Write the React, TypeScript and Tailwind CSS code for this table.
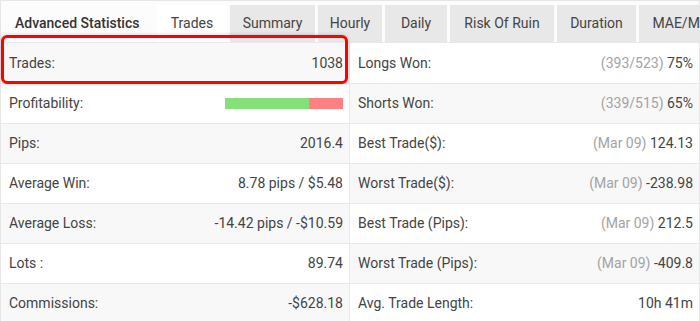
const tabs = [
  { label: "Trades", w: "w-[70px]", active: true },
  { label: "Summary", w: "w-[85px]" },
  { label: "Hourly", w: "w-[64px]" },
  { label: "Daily", w: "w-[62px]" },
  { label: "Risk Of Ruin", w: "w-[104px]" },
  { label: "Duration", w: "w-[79px]" },
  { label: "MAE/MFE", w: "w-[90px]" },
];

type Cell = { label: string; muted?: string; value?: string; bar?: boolean };

const left: Cell[] = [
  { label: "Trades:", value: "1038" },
  { label: "Profitability:", bar: true },
  { label: "Pips:", value: "2016.4" },
  { label: "Average Win:", value: "8.78 pips / $5.48" },
  { label: "Average Loss:", value: "-14.42 pips / -$10.59" },
  { label: "Lots :", value: "89.74" },
  { label: "Commissions:", value: "-$628.18" },
];

const right: Cell[] = [
  { label: "Longs Won:", muted: "(393/523)", value: "75%" },
  { label: "Shorts Won:", muted: "(339/515)", value: "65%" },
  { label: "Best Trade($):", muted: "(Mar 09)", value: "124.13" },
  { label: "Worst Trade($):", muted: "(Mar 09)", value: "-238.98" },
  { label: "Best Trade (Pips):", muted: "(Mar 09)", value: "212.5" },
  { label: "Worst Trade (Pips):", muted: "(Mar 09)", value: "-409.8" },
  { label: "Avg. Trade Length:", value: "10h 41m" },
];

function Row({ cell, shaded, first }: { cell: Cell; shaded: boolean; first: boolean }) {
  return (
    <div
      className={`h-[40px] flex items-center justify-between pl-[8px] pr-[6px] ${first ? "" : "border-t border-[#e9e9e9]"} ${shaded ? "bg-[#f8f8f8]" : "bg-white"}`}
    >
      <span>{cell.label}</span>
      {cell.bar ? (
        <div className="flex h-[11px] w-[118px]">
          <div className="w-[84px] bg-[#86e07a]" />
          <div className="flex-1 bg-[#ff8080]" />
        </div>
      ) : (
        <span>
          {cell.muted && <span className="text-[#a3a3a3]">{cell.muted} </span>}
          {cell.value}
        </span>
      )}
    </div>
  );
}

export default function App() {
  return (
    <div className="relative w-[700px] h-[321px] overflow-hidden bg-white text-[14px] text-[#444] font-['Roboto',sans-serif]">
      <div className="h-full border-t border-l border-r border-[#e6e6e6] bg-[#fcfcfc]">
        <div className="flex items-end h-[41px] pt-[4px]">
          <div className="w-[156px] shrink-0 pl-[14px] h-full flex items-center whitespace-nowrap font-medium text-[#333]">
            Advanced Statistics
          </div>
          <div className="flex gap-[3px] h-full">
            {tabs.map((t) => (
              <div
                key={t.label}
                className={`${t.w} shrink-0 flex items-center justify-center whitespace-nowrap ${t.active ? "bg-white" : "bg-[#e8e8e8]"}`}
              >
                {t.label}
              </div>
            ))}
          </div>
        </div>
        <div className="grid grid-cols-[349px_1fr] border-t border-[#e9e9e9]">
          <div className="border-r border-[#e9e9e9]">
            {left.map((c, i) => (
              <Row key={c.label} cell={c} shaded={i % 2 === 0} first={i === 0} />
            ))}
          </div>
          <div>
            {right.map((c, i) => (
              <Row key={c.label} cell={c} shaded={i % 2 === 1} first={i === 0} />
            ))}
          </div>
        </div>
      </div>
      <div className="absolute left-[1px] top-[35px] w-[347px] h-[49px] rounded-[6px] border-[3px] border-[#f00] shadow-[0_0_4px_rgba(0,0,0,0.2)]" />
    </div>
  );
}
